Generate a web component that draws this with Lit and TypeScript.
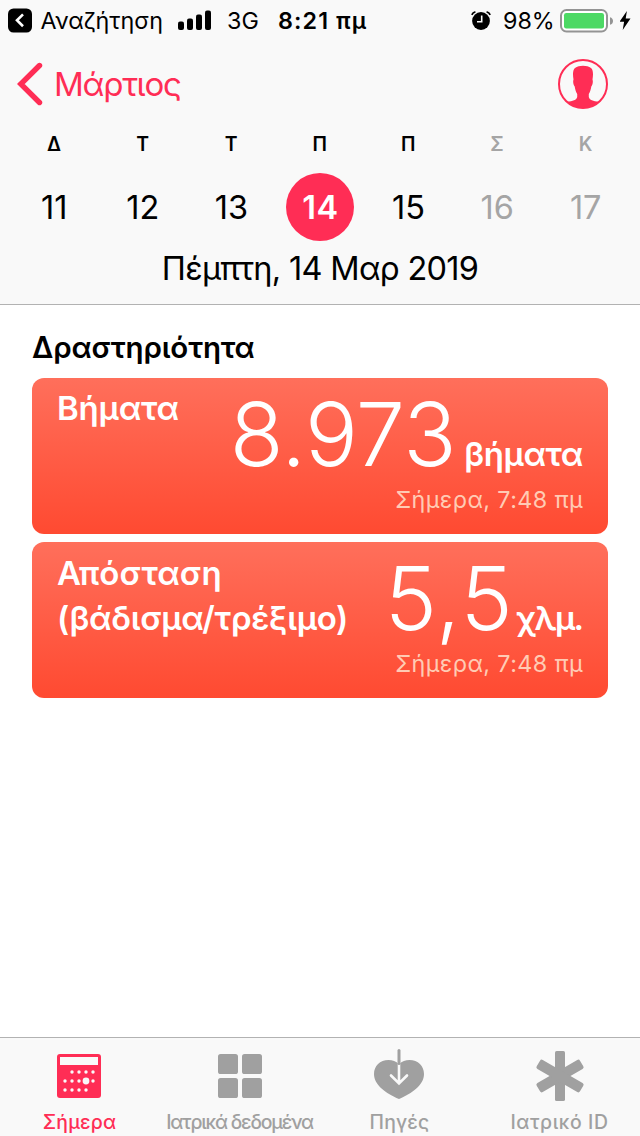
import { LitElement, html, css, svg } from "lit";
import { customElement, property } from "lit/decorators.js";

const FONT = css`"Inter", "Noto Sans", sans-serif`;

@customElement("status-bar")
class StatusBar extends LitElement {
  static styles = css`
    :host {
      display: flex;
      align-items: center;
      height: 41px;
      padding: 0 9px 0 8px;
      box-sizing: border-box;
      font-family: ${FONT};
      font-size: 23.3px;
      line-height: 41px;
      white-space: nowrap;
      color: #000;
    }
    svg {
      display: block;
      flex: none;
    }
    .app { width: 121px; margin-left: 7.5px; margin-right: 0.5px; }
    .signal { margin-left: 16px; }
    .network { width: 32px; margin-left: 15px; }
    .clock { margin-left: 19px; font-weight: 600; letter-spacing: 1.1px; }
    .spacer { flex: 1; }
    .percent { width: 50px; margin: 0 7px 0 12px; }
    .bolt { margin-left: 6px; }
  `;

  render() {
    return html`
      <svg width="25" height="25" viewBox="0 0 25 25">
        <rect width="24" height="24" y="0.5" rx="5.5" fill="#000" />
        <path d="M15 6.4 9 12.3 15 18.2" fill="none" stroke="#fff" stroke-width="2.6" />
      </svg>
      <span class="app">Αναζήτηση</span>
      <svg class="signal" width="34" height="22" viewBox="0 0 34 22">
        <rect x="0" y="11.5" width="6" height="8.5" rx="2" />
        <rect x="9" y="8.5" width="6" height="11.5" rx="2" />
        <rect x="18" y="4.5" width="6" height="15.5" rx="2" />
        <rect x="27" y="0.5" width="6" height="19.5" rx="2" />
      </svg>
      <span class="network">3G</span>
      <span class="clock">8:21 πμ</span>
      <span class="spacer"></span>
      <svg width="20" height="20" viewBox="0 0 20 20">
        <circle cx="10" cy="10" r="8.9" />
        <path d="M0.8 3.8A5 5 0 0 1 4.4 0.9M19.2 3.8A5 5 0 0 0 15.6 0.9" fill="none" stroke="#000" stroke-width="1.8" />
        <path d="M10.7 4.6V10.7H6" fill="none" stroke="#f9f9f9" stroke-width="1.6" />
      </svg>
      <span class="percent">98%</span>
      <svg width="54" height="24" viewBox="0 0 54 24">
        <rect x="1" y="1" width="46" height="21.5" rx="5.5" fill="#fff" stroke="#949494" stroke-width="2" />
        <rect x="4" y="4" width="40" height="15.4" rx="2.2" fill="#4cd964" />
        <path d="M50 8.2C54 9.2 54 14.8 50 15.8Z" fill="#949494" />
      </svg>
      <svg class="bolt" width="11" height="20" viewBox="0.5 0.5 11 20">
        <path d="M7.4 0.6 0 11.2H4.6L3.2 19.4 11 8H6.2Z" />
      </svg>
    `;
  }
}

@customElement("week-strip")
class WeekStrip extends LitElement {
  static styles = css`
    :host {
      display: grid;
      grid-template-columns: repeat(7, 1fr);
      padding: 1px 10px 0;
      font-family: ${FONT};
      color: #000;
    }
    .day {
      display: flex;
      flex-direction: column;
      align-items: center;
      gap: 13px;
    }
    .name {
      padding-right: 0.5px;
      font-size: 19.4px;
      font-weight: 600;
      line-height: 32px;
    }
    .number {
      width: 68px;
      height: 68px;
      border-radius: 34px;
      font-size: 32.5px;
      line-height: 70px;
      text-align: center;
    }
    .selected {
      background: #ff2d55;
      color: #fff;
      font-weight: 600;
      letter-spacing: 0.5px;
      text-indent: 1px;
    }
    .weekend { color: #a5a5a5; }
  `;

  private days = [
    ["Δ", 11], ["Τ", 12], ["Τ", 13], ["Π", 14], ["Π", 15], ["Σ", 16], ["Κ", 17],
  ] as const;

  render() {
    return this.days.map(
      ([name, n]) => html`
        <div class="day ${n > 15 ? "weekend" : ""}">
          <span class="name">${name}</span>
          <span class="number ${n === 14 ? "selected" : ""}">${n}</span>
        </div>
      `
    );
  }
}

@customElement("activity-card")
class ActivityCard extends LitElement {
  @property() value = "";
  @property() unit = "";
  @property() time = "";

  static styles = css`
    :host {
      display: flex;
      justify-content: space-between;
      height: 156px;
      box-sizing: border-box;
      padding: 0 25px;
      border-radius: 12px;
      background: linear-gradient(#ff6f5b, #ff4a31);
      color: #fff;
      font-family: ${FONT};
      white-space: nowrap;
    }
    .title {
      padding-top: 8px;
      font-size: 33px;
      font-weight: 600;
      line-height: 45px;
      letter-spacing: -0.2px;
    }
    .reading {
      display: flex;
      flex-direction: column;
      align-items: flex-end;
    }
    .amount {
      display: flex;
      align-items: baseline;
      gap: 8px;
      height: 112px;
      line-height: 112px;
    }
    .value {
      font-size: 88px;
      font-weight: 300;
      letter-spacing: -0.4px;
    }
    .unit {
      font-size: 33px;
      font-weight: 600;
      letter-spacing: -0.4px;
    }
    :host([compact]) .title { padding-top: 9px; }
    :host([compact]) .amount { gap: 2.5px; }
    :host([compact]) .value { letter-spacing: 1.2px; }
    :host([compact]) .unit { letter-spacing: -1.6px; padding-right: 0.5px; }
    .time {
      font-size: 23.3px;
      line-height: 20px;
      letter-spacing: 0.4px;
      color: #ffcbb4;
    }
  `;

  render() {
    return html`
      <div class="title"><slot></slot></div>
      <div class="reading">
        <div class="amount">
          <span class="value">${this.value}</span>
          <span class="unit">${this.unit}</span>
        </div>
        <div class="time">${this.time}</div>
      </div>
    `;
  }
}

@customElement("tab-bar")
class TabBar extends LitElement {
  static styles = css`
    :host {
      display: grid;
      grid-template-columns: repeat(4, 1fr);
      height: 99px;
      box-sizing: border-box;
      border-top: 1px solid #b2b2b2;
      background: #f9f9f9;
      font-family: ${FONT};
      color: #a0a0a0;
    }
    .tab {
      display: flex;
      flex-direction: column;
      align-items: center;
      padding-top: 10px;
    }
    .active { color: #ff2d55; }
    svg { display: block; fill: currentColor; }
    .label {
      margin-top: 4px;
      padding-right: 1px;
      font-size: 19.4px;
      font-weight: 500;
      line-height: 28px;
      letter-spacing: 0.2px;
      white-space: nowrap;
    }
    .tight { letter-spacing: -1.2px; }
    .loose { letter-spacing: 0.6px; }
  `;

  private dots = [
    [15, 18], [22, 18], [29, 18], [36, 18],
    [8, 27], [15, 27], [22, 27], [36, 27],
    [8, 36], [15, 36], [22, 36], [29, 36],
  ];

  render() {
    return html`
      <div class="tab active">
        <svg width="52" height="56" viewBox="-3 -6 52 56">
          <rect width="44" height="44" rx="3" />
          <rect x="3" y="3" width="38" height="8" fill="#f9f9f9" />
          ${this.dots.map(([x, y]) => svg`<circle cx=${x} cy=${y} r="1.7" fill="#f9f9f9" />`)}
          <circle cx="29" cy="27" r="3.4" fill="#f9f9f9" />
        </svg>
        <span class="label">Σήμερα</span>
      </div>
      <div class="tab">
        <svg width="52" height="56" viewBox="-4 -6 52 56">
          <rect width="20" height="20" rx="2.6" />
          <rect x="24" width="20" height="20" rx="2.6" />
          <rect y="24" width="20" height="20" rx="2.6" />
          <rect x="24" y="24" width="20" height="20" rx="2.6" />
        </svg>
        <span class="label tight">Ιατρικά δεδομένα</span>
      </div>
      <div class="tab">
        <svg width="52" height="56" viewBox="0 -1 52 56">
          <path d="M25 15.5C22 12 18.5 11 14.5 11 6 11 0 17 0 25 0 36 12 44.5 25 50 38 44.5 50 36 50 25 50 17 44 11 35.5 11 31.5 11 28 12 25 15.5Z" />
          <path d="M25 15V34M17 26.5 25 34.5 33 26.5" fill="none" stroke="#f9f9f9" stroke-width="2.6" stroke-linecap="round" />
          <path d="M25 1.5V14.5" stroke="#a0a0a0" stroke-width="3" stroke-linecap="round" />
        </svg>
        <span class="label">Πηγές</span>
      </div>
      <div class="tab">
        <svg width="52" height="56" viewBox="-26 -28 52 56">
          <rect x="-5" y="-25" width="10" height="50" rx="1.6" />
          ${[60, 120].map((a) => svg`<rect x="-5.3" y="-25" width="10.6" height="50" rx="2" transform="rotate(${a})" />`)}
        </svg>
        <span class="label loose">Ιατρικό ID</span>
      </div>
    `;
  }
}

@customElement("app-root")
class AppRoot extends LitElement {
  static styles = css`
    :host {
      display: flex;
      flex-direction: column;
      height: 1136px;
      background: #fff;
      color: #000;
      font-family: ${FONT};
    }
    header {
      height: 305px;
      box-sizing: border-box;
      border-bottom: 1px solid #b2b2b2;
      background: #f9f9f9;
    }
    nav {
      display: flex;
      align-items: center;
      justify-content: space-between;
      height: 86px;
      padding: 0 32px 0 17px;
    }
    nav svg { display: block; }
    .back {
      display: flex;
      align-items: center;
      gap: 11px;
      color: #ff2d55;
      font-size: 33px;
      line-height: 87px;
      letter-spacing: -1.2px;
    }
    .date {
      font-size: 32.5px;
      line-height: 56px;
      letter-spacing: -0.7px;
      text-align: center;
    }
    main {
      display: flex;
      flex: 1;
      flex-direction: column;
      gap: 8px;
      padding: 0 32px;
    }
    h2 {
      margin: 20px 0 1px;
      font-size: 29.5px;
      font-weight: 600;
      line-height: 44px;
      letter-spacing: -0.15px;
    }
    .wide { letter-spacing: 0.1px; }
    .narrow { letter-spacing: -0.3px; }
  `;

  render() {
    return html`
      <header>
        <status-bar></status-bar>
        <nav>
          <div class="back">
            <svg width="26" height="44" viewBox="0 0 26 44">
              <path d="M22.5 3.5 3.8 22 22.5 40.5" fill="none" stroke="#ff2d55" stroke-width="5.4" stroke-linecap="round" />
            </svg>
            <span>Μάρτιος</span>
          </div>
          <svg width="50" height="50" viewBox="0 0 50 50">
            <defs><clipPath id="disc"><circle cx="25" cy="25" r="24" /></clipPath></defs>
            <path clip-path="url(#disc)" fill="#ff2d55" d="M15.5 20.5C14.6 15 14.8 11 17 9 19 7.5 22 6.8 25 6.8S31 7.5 33 9C35.2 11 35.4 15 34.5 20.5 35.2 22 34.8 26 33.3 27.5 32.8 30.5 32 33 30.8 35V38C31.5 41 35 42 41 42.8V50H9V42.8C15 42 18.5 41 19.2 38V35C18 33 17.2 30.5 16.7 27.5 15.2 26 14.8 22 15.5 20.5Z" />
            <circle cx="25" cy="25" r="24" fill="none" stroke="#ff2d55" stroke-width="2" />
          </svg>
        </nav>
        <week-strip></week-strip>
        <div class="date">Πέμπτη, 14 Μαρ 2019</div>
      </header>
      <main>
        <h2>Δραστηριότητα</h2>
        <activity-card value="8.973" unit="βήματα" time="Σήμερα, 7:48 πμ">Βήματα</activity-card>
        <activity-card compact value="5,5" unit="χλμ." time="Σήμερα, 7:48 πμ"><span class="wide">Απόσταση</span><br /><span class="narrow">(βάδισμα/τρέξιμο)</span></activity-card>
      </main>
      <tab-bar></tab-bar>
    `;
  }
}
